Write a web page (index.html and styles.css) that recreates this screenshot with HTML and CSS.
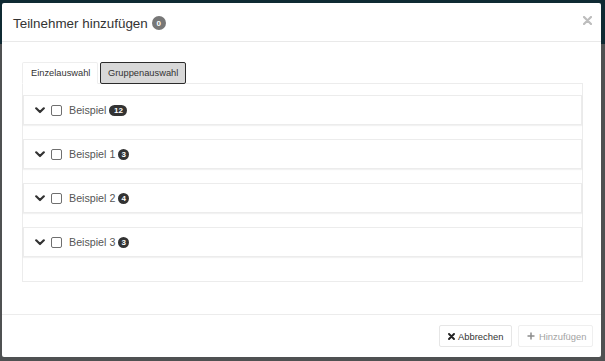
FILE: index.html
```html
<!DOCTYPE html>
<html lang="de">
<head>
<meta charset="utf-8">
<title>Teilnehmer hinzufügen</title>
<link rel="stylesheet" href="styles.css">
</head>
<body>
<div class="modal">
  <div class="modal-header">
    <h4 class="modal-title">Teilnehmer hinzufügen <span class="count-badge">0</span></h4>
    <button class="close" aria-label="Schließen">
      <svg width="9" height="9" viewBox="0 0 9 9"><path d="M1 1L8 8M8 1L1 8" stroke="#bdbdbd" stroke-width="2.2" stroke-linecap="round"/></svg>
    </button>
  </div>
  <div class="modal-body">
    <ul class="tabs">
      <li class="tab active">Einzelauswahl</li>
      <li class="tab focused">Gruppenauswahl</li>
    </ul>
    <div class="tab-content">
      <div class="panel">
        <div class="panel-heading">
          <svg class="chev" width="10" height="7" viewBox="0 0 10 7"><path d="M1.2 1.3L5 5L8.8 1.3" fill="none" stroke="#333" stroke-width="2.2" stroke-linecap="round" stroke-linejoin="round"/></svg>
          <span class="check"></span>
          <span class="label">Beispiel</span>
          <span class="badge pill">12</span>
        </div>
      </div>
      <div class="panel">
        <div class="panel-heading">
          <svg class="chev" width="10" height="7" viewBox="0 0 10 7"><path d="M1.2 1.3L5 5L8.8 1.3" fill="none" stroke="#333" stroke-width="2.2" stroke-linecap="round" stroke-linejoin="round"/></svg>
          <span class="check"></span>
          <span class="label">Beispiel 1</span>
          <span class="badge">3</span>
        </div>
      </div>
      <div class="panel">
        <div class="panel-heading">
          <svg class="chev" width="10" height="7" viewBox="0 0 10 7"><path d="M1.2 1.3L5 5L8.8 1.3" fill="none" stroke="#333" stroke-width="2.2" stroke-linecap="round" stroke-linejoin="round"/></svg>
          <span class="check"></span>
          <span class="label">Beispiel 2</span>
          <span class="badge">4</span>
        </div>
      </div>
      <div class="panel">
        <div class="panel-heading">
          <svg class="chev" width="10" height="7" viewBox="0 0 10 7"><path d="M1.2 1.3L5 5L8.8 1.3" fill="none" stroke="#333" stroke-width="2.2" stroke-linecap="round" stroke-linejoin="round"/></svg>
          <span class="check"></span>
          <span class="label">Beispiel 3</span>
          <span class="badge">3</span>
        </div>
      </div>
    </div>
  </div>
  <div class="modal-footer">
    <button class="btn cancel">
      <svg width="7" height="7" viewBox="0 0 7 7"><path d="M1 1L6 6M6 1L1 6" stroke="#222" stroke-width="1.9" stroke-linecap="round"/></svg>
      <span>Abbrechen</span>
    </button>
    <button class="btn disabled">
      <svg width="8" height="8" viewBox="0 0 8 8"><path d="M4 0.5V7.5M0.5 4H7.5" stroke="#8c8c8c" stroke-width="1.5"/></svg>
      <span>Hinzufügen</span>
    </button>
  </div>
</div>
</body>
</html>
```

FILE: styles.css
```css
html, body {
  margin: 0;
  padding: 0;
}
body {
  width: 605px;
  height: 361px;
  overflow: hidden;
  background: linear-gradient(#0f2a33 0, #0f2a33 44px, #4f5152 44px, #4f5152 100%);
  font-family: "Liberation Sans", Arial, sans-serif;
  color: #333;
}
svg {
  flex-shrink: 0;
}
.modal {
  margin: 3px 4px 0 2px;
  width: 599px;
  height: 354px;
  background: #fff;
  border-radius: 2px;
  display: flex;
  flex-direction: column;
  box-sizing: border-box;
}
.modal-header {
  height: 39px;
  box-sizing: border-box;
  border-bottom: 1px solid #e9e9e9;
  display: flex;
  align-items: center;
  justify-content: space-between;
  padding: 2px 9px 0 11px;
}
.modal-title {
  margin: 0;
  font-size: 13.4px;
  font-weight: normal;
  color: #333;
  display: flex;
  align-items: center;
  gap: 4px;
}
.count-badge {
  display: inline-flex;
  align-items: center;
  justify-content: center;
  width: 14px;
  height: 14px;
  border-radius: 50%;
  background: #777;
  color: #fff;
  font-size: 8px;
  font-weight: bold;
}
.close {
  border: 0;
  background: none;
  padding: 0;
  margin-top: -6px;
  display: flex;
}
.modal-body {
  flex: 1;
  padding: 20px 18px 0 20px;
}
.tabs {
  list-style: none;
  margin: 0 0 -1px;
  padding: 0;
  display: flex;
  gap: 2px;
  position: relative;
}
.tab {
  height: 22px;
  box-sizing: border-box;
  display: flex;
  align-items: center;
  font-size: 9.3px;
  color: #333;
}
.tab.active {
  padding: 0 8px 0 8px;
  border: 1px solid #eeeeee;
  border-bottom-color: transparent;
  background: #fff;
  border-radius: 2px 2px 0 0;
  width: 76px;
}
.tab.focused {
  height: 22px;
  padding: 0 7px;
  background: #d8d8d8;
  border: 1.5px solid #2b2b2b;
  border-radius: 2px;
  width: 86px;
}
.tab-content {
  border: 1px solid #ececec;
  padding: 11px 0 10px;
}
.panel {
  border: 1px solid #ececec;
  box-shadow: 0 1px 1px rgba(0, 0, 0, 0.05);
  margin: 0 0 14px 0;
}
.panel-heading {
  height: 28px;
  display: flex;
  align-items: center;
  padding-left: 11px;
}
.chev {
  margin-right: 6px;
  margin-top: 1px;
}
.check {
  width: 11px;
  height: 11px;
  box-sizing: border-box;
  border: 1px solid #6f6f6f;
  border-radius: 2px;
  margin-right: 7px;
}
.label {
  font-size: 10.7px;
  color: #555;
  margin-right: 3px;
}
.badge {
  display: inline-flex;
  align-items: center;
  justify-content: center;
  min-width: 11px;
  height: 11px;
  border-radius: 6px;
  background: #333;
  color: #fff;
  font-size: 8px;
  font-weight: bold;
  box-sizing: border-box;
}
.badge.pill {
  min-width: 18px;
  padding: 0 3px;
}
.modal-footer {
  border-top: 1px solid #ececec;
  padding: 10px 8px 10px 0;
  display: flex;
  justify-content: flex-end;
  gap: 6px;
}
.btn {
  height: 22px;
  box-sizing: border-box;
  border: 1px solid #e6e6e6;
  border-radius: 2px;
  background: #fff;
  font-family: "Liberation Sans", Arial, sans-serif;
  font-size: 9.4px;
  color: #333;
  display: flex;
  align-items: center;
  justify-content: flex-start;
  padding: 0 0 0 8px;
  white-space: nowrap;
  overflow: hidden;
}
.btn.cancel {
  width: 73px;
  gap: 3px;
}
.btn.disabled {
  color: #a3a3a3;
  width: 75px;
  gap: 4px;
  border-color: #efefef;
}
```
